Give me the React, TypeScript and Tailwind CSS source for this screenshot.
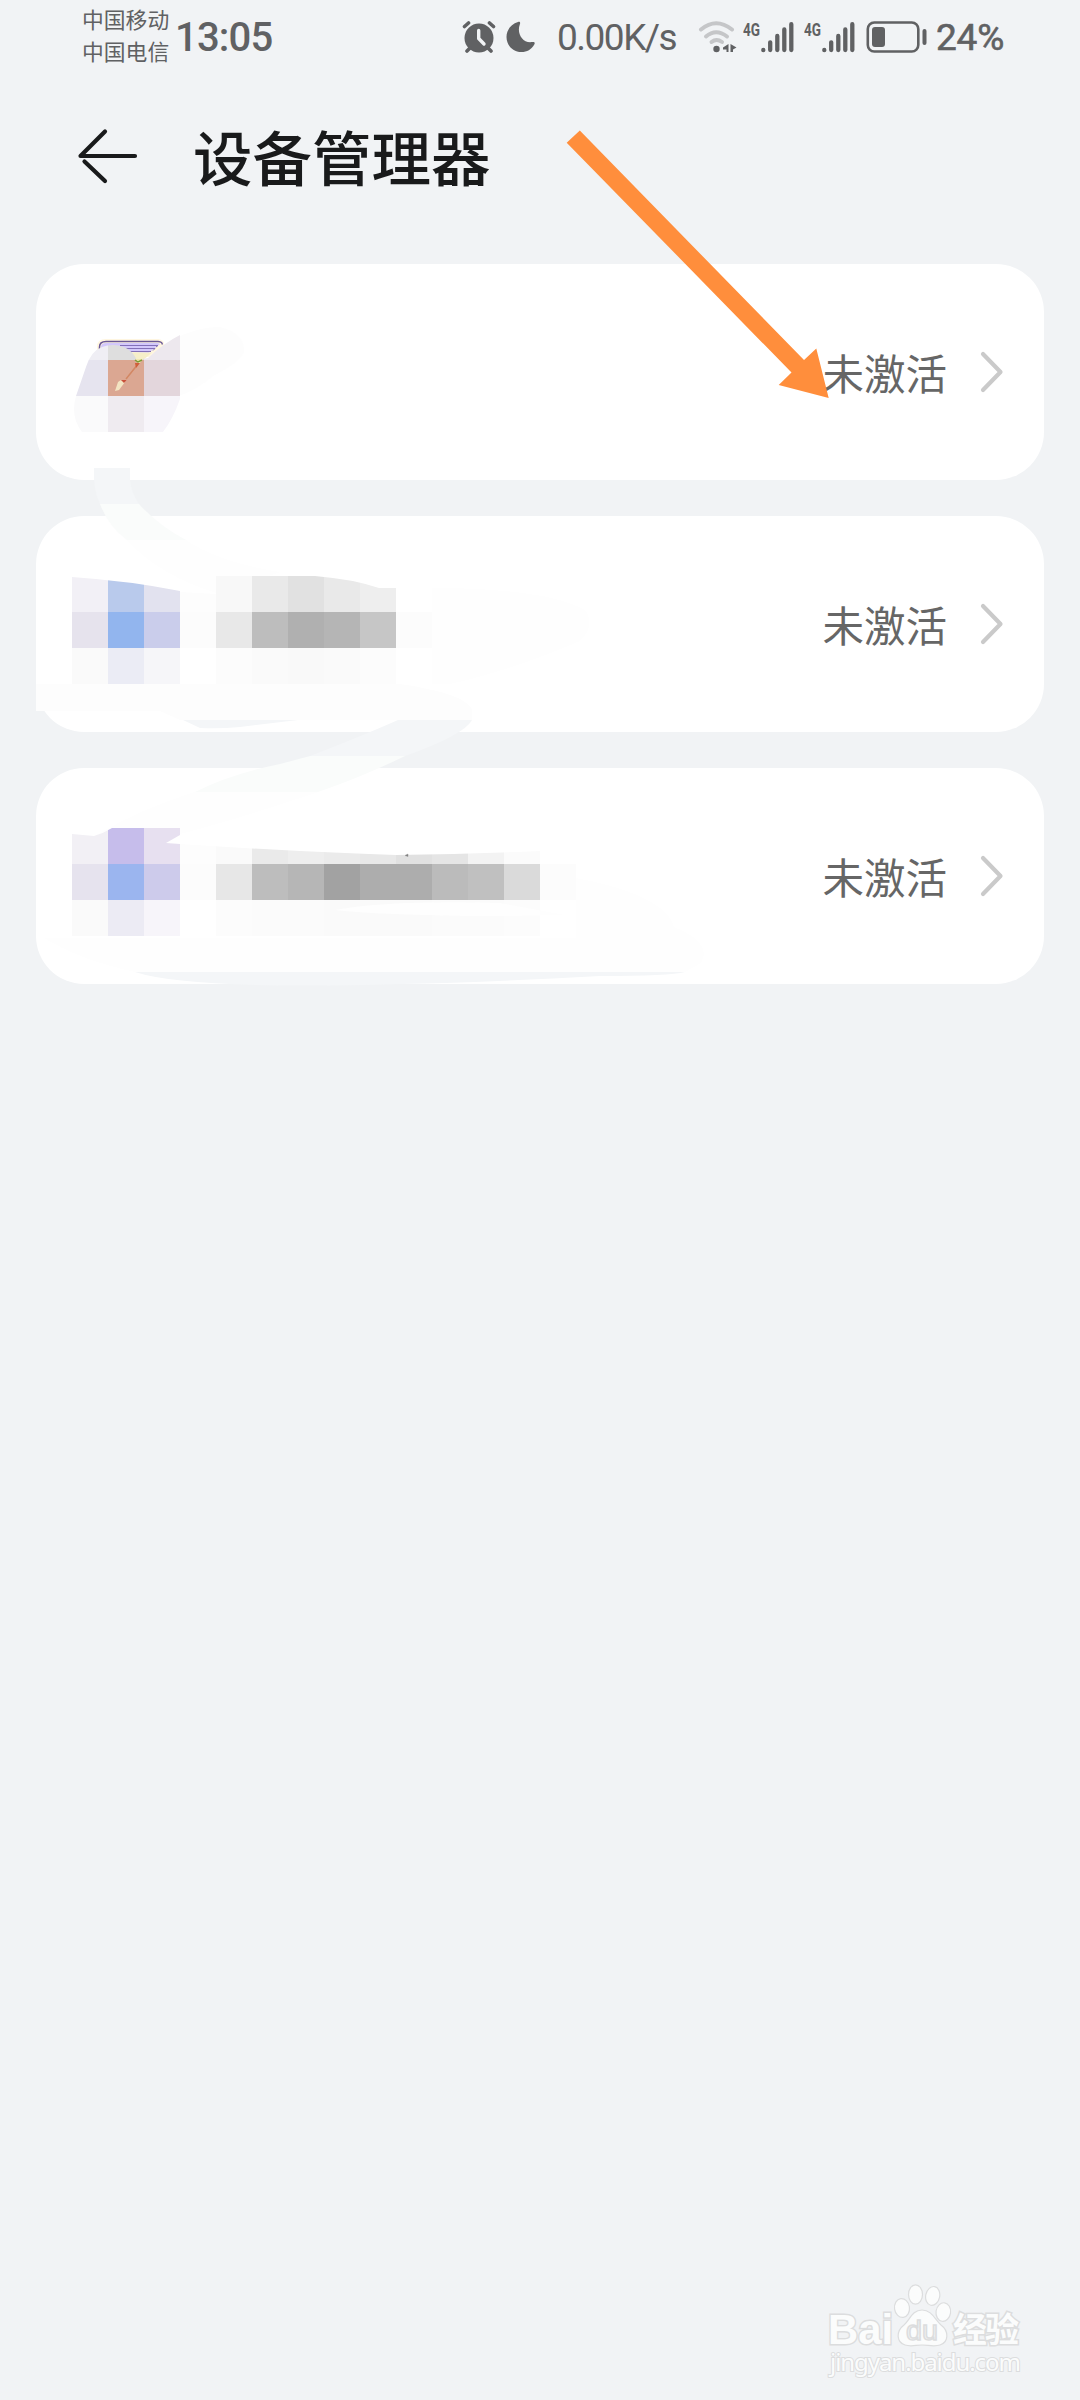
import type { ReactNode } from "react";

const CELL = 36;

type Mosaic = { x: number; y: number; rows: string[][]; clip: string };

const mosaics: Mosaic[] = [
  {
    x: 72,
    y: 324,
    rows: [
      ["#efeef4", "#dedede", "#ede8ee"],
      ["#e6e4ef", "#dba792", "#e3d6dc"],
      ["#fafafb", "#efebf0", "#f7f5fa"],
    ],
    clip: "M76 396L86 367Q91 351 102 347Q113 343 124 347Q132 350 137 360L148 358Q164 343 180 335V399Q173 419 163 432H82Q70 417 76 396Z",
  },
  {
    x: 72,
    y: 576,
    rows: [
      ["#f2f0f6", "#b9caec", "#e2e2ef"],
      ["#e6e3ed", "#92b5ee", "#cacdeb"],
      ["#fafafa", "#ebecf5", "#f6f6f9"],
    ],
    clip: "M72 577Q130 581 180 591V684H72Z",
  },
  {
    x: 180,
    y: 576,
    rows: [
      ["#fdfdfd", "#f8f8f8", "#e9e9e9", "#e1e1e1", "#e9e9e9", "#eeeeee", "#ffffff"],
      ["#fcfcfc", "#e8e8e8", "#bdbdbd", "#b0b0b0", "#b5b5b5", "#c6c6c6", "#fcfcfc"],
      ["#ffffff", "#fcfcfc", "#fafafa", "#f9f9f9", "#fafafa", "#fcfcfc", "#ffffff"],
    ],
    clip: "M180 592L216 594V576H315Q352 579 379 588H432V684H180Z",
  },
  {
    x: 72,
    y: 828,
    rows: [
      ["#f2f0f5", "#c6bdeb", "#e7e0f0"],
      ["#e6e3ee", "#9bb5ef", "#cdcbeb"],
      ["#fafafa", "#ecebf4", "#f7f5fa"],
    ],
    clip: "M72 834L94 836Q104 833 112 828H180V835L166 843L180 844V936H72Z",
  },
  {
    x: 180,
    y: 828,
    rows: [
      ["#fdfdfd", "#fafafa", "#eaeaea", "#eeeeee", "#ebebeb", "#e8e8e8", "#e1e1e1", "#e5e5e5", "#f3f3f3", "#fbfbfb", "#ffffff"],
      ["#fcfcfc", "#e7e7e7", "#bdbdbd", "#b6b6b6", "#a2a2a2", "#adadad", "#adadad", "#bbbbbb", "#c0c0c0", "#dadada", "#fcfcfc"],
      ["#ffffff", "#fcfcfc", "#fbfbfb", "#fbfbfb", "#fafafa", "#fafafa", "#fafafa", "#fbfbfb", "#fbfbfb", "#fcfcfc", "#ffffff"],
    ],
    clip: "M180 844Q300 852 396 855Q470 854 540 851H576V936H180Z",
  },
];

const devices = [{ status: "未激活" }, { status: "未激活" }, { status: "未激活" }];

function AlarmIcon() {
  return (
    <svg width="34" height="34" viewBox="0 0 34 34" fill="none">
      <circle cx="17" cy="18" r="14.5" fill="#606163" />
      <path d="M2.5 6.5L6.5 3M31.5 6.5L27.5 3M8 28L5 31M26 28L29 31" stroke="#606163" strokeWidth="3.6" strokeLinecap="round" />
      <path d="M16.7 10.5V18.5L22 24" stroke="#f1f3f5" strokeWidth="3.4" strokeLinecap="round" strokeLinejoin="round" />
    </svg>
  );
}

function MoonIcon() {
  return (
    <svg width="30" height="32" viewBox="0 0 30 32">
      <path d="M12 1C14 .5 14.6 1.5 13.8 3.5C10.5 12 16.500 22.500 26 21C28.500 20.600 29.300 21.500 28.300 23.500C25.500 28.500 21 31 15.500 31C7 31 .5 24.500 .5 16C.5 9 5 3 12 1Z" fill="#606163" />
    </svg>
  );
}

function WifiIcon() {
  return (
    <svg width="40" height="34" viewBox="0 0 40 34" fill="none">
      <g stroke="#c5c6c8" strokeWidth="4" strokeLinecap="round">
        <path d="M3 9.500Q18 -3 34 9.500" />
        <path d="M8 16.500Q18 8 29 16.500" />
        <path d="M13.500 22Q18.500 18 24 22" />
      </g>
      <circle cx="18.500" cy="29" r="3.200" fill="#606163" />
      <path d="M30.500 24V32H28.500V29.500H25V27.500ZM32.500 24L38.500 27.500L35 29.500V32H32.500Z" fill="#606163" />
    </svg>
  );
}

function SignalIcon() {
  return (
    <svg width="51" height="48" viewBox="0 -7 51 48">
      <text x="0" y="15.500" textLength="17" lengthAdjust="spacingAndGlyphs" fill="#606163" className="font-['Roboto'] text-[19px] font-bold">
        4G
      </text>
      <path d="M20.300 30V30.200M27.200 22.300V30M34.300 16V30M41.300 9.500V30M48.300 4.200V30" stroke="#606163" strokeWidth="4.300" strokeLinecap="round" />
    </svg>
  );
}

function BatteryIcon() {
  return (
    <svg width="61" height="34" viewBox="0 0 61 34" fill="none">
      <rect x="1.800" y="2.500" width="50.500" height="29" rx="6.500" stroke="#606163" strokeWidth="2.600" />
      <rect x="6" y="7" width="13" height="20" rx="3" fill="#606163" />
      <path d="M58.500 11V23" stroke="#606163" strokeWidth="4" strokeLinecap="round" />
    </svg>
  );
}

function StatusBar() {
  return (
    <div className="flex h-[73px] items-center pl-[82px] text-[#606163]">
      <div className="w-[93px] whitespace-nowrap pb-1 text-[21.8px] leading-8">
        <p>中国移动</p>
        <p>中国电信</p>
      </div>
      <p className="w-[287px] pt-0.5 font-['Roboto'] text-[40px] font-medium leading-none tracking-[-0.8px]">13:05</p>
      <AlarmIcon />
      <div className="ml-2.5 w-[51px]">
        <MoonIcon />
      </div>
      <p className="w-[141px] pt-0.5 font-['Roboto'] text-[37px] leading-none tracking-[-1.5px]">0.00K/s</p>
      <WifiIcon />
      <div className="ml-[5px] flex gap-2.5">
        <SignalIcon />
        <SignalIcon />
      </div>
      <div className="ml-[11px] w-[70px]">
        <BatteryIcon />
      </div>
      <p className="pt-0.5 font-['Roboto'] text-[37px] leading-none tracking-[-0.2px] [-webkit-text-stroke:0.6px_#606163]">24%</p>
    </div>
  );
}

function Header() {
  return (
    <header className="flex h-[166px] items-center pl-[77px] text-[#191a1b]">
      <svg width="62" height="56" viewBox="0 0 62 56" fill="none" className="mr-[54px]">
        <path d="M58 28H3.500L28 3.500M7.500 33.500L28 53" stroke="#191a1b" strokeWidth="4.200" strokeLinecap="round" strokeLinejoin="round" />
      </svg>
      <h1 className="text-[59.5px] font-medium leading-none">设备管理器</h1>
    </header>
  );
}

function Card({ children }: { children: ReactNode }) {
  return <li className="flex h-[216px] items-center justify-end rounded-[48px] bg-white pr-10">{children}</li>;
}

// Blurred-out app icons and names, drawn in page coordinates
function Redaction() {
  return (
    <svg width="1080" height="1000" viewBox="0 0 1080 1000" className="pointer-events-none absolute left-0 top-0" fill="none">
      <defs>
        {mosaics.map((m, i) => (
          <clipPath id={`mosaic-${i}`} key={i}>
            <path d={m.clip} />
          </clipPath>
        ))}
      </defs>

      <path d="M148 354Q190 326 220 327Q245 333 244 352Q239 363 213 376Q194 392 178 396Z" fill="#fdfdfd" />
      <path d="M94 468H130V480Q131 492 139 504H100Q93 490 94 468Z" fill="#f4f6f8" />
      <path d="M100 504H139Q159 526 186 540H127Q108 526 100 504Z" fill="#fafcfb" />
      <path d="M127 540H186Q218 562 280 572L219 594Q158 575 127 540Z" fill="#fefefe" />
      <path d="M432 588Q545 588 585 610Q596 625 580 641Q510 671 450 684H432Z" fill="#fefefe" />
      <path d="M36 684H400Q467 694 472 710V720H180L160 711H36Z" fill="#fdfdfd" />
      <path d="M183 720H298L240 727Q220 729 200 728Z" fill="#f4f6f8" />
      <path d="M398 720H472Q464 735 405 756H310Q362 736 398 720Z" fill="#f4f6f8" />
      <path d="M310 756H405Q362 777 318 792H195Q231 774 280 764Z" fill="#fafcfb" />
      <path d="M195 792H318Q238 819 180 834L94 836Q145 807 195 792Z" fill="#fefefe" />
      <path d="M576 878Q665 895 674 927Q713 943 701 963L685 972H135Q80 960 44 938H576Z" fill="#fefefe" />
      <path d="M135 972H685Q670 976 600 976Q490 982 400 984Q190 990 135 972Z" fill="#f4f6f8" />

      {/* uncovered part of the first app icon */}
      <path d="M99 352V347Q99 341 106 341H158Q163 342 162 345L149 355Z" fill="#d3c8fb" stroke="#fff6e0" strokeWidth="4" />
      <path d="M99.500 352V347Q99.500 341.500 106 341.500H158Q163 342 162 344.500" stroke="#6a5796" strokeWidth="1.500" />
      <path d="M120 345.500H158L156 347M126 348.500H155L153 350.500M129 351.500H151" stroke="#8370b8" strokeWidth="1" />
      <path d="M130 352.500H152L141 362H136Z" fill="#f6efc9" />

      {mosaics.map((m, i) => (
        <g clipPath={`url(#mosaic-${i})`} key={i}>
          {m.rows.map((row, r) =>
            row.map((color, c) => (
              <rect key={`${r}-${c}`} x={m.x + c * CELL} y={m.y + r * CELL} width={CELL} height={CELL} fill={color} />
            ))
          )}
        </g>
      ))}

      <path d="M135 359H143L139 364Z" fill="#efe6b0" />
      <path d="M138 364L126 379" stroke="#d28763" strokeWidth="1.500" />
      <path d="M135 360L138 362L142 360" stroke="#7d9a35" strokeWidth="1.500" />
      <path d="M135 363H140L136 368Z" fill="#d05e3a" />
      <path d="M115 391L118 382L121 380L125 382L119 390Z" fill="#f3e4c2" />
      <path d="M121 380L126.500 380L124 383Z" fill="#c9503a" />
      <path d="M335 910Q390 900 500 903L565 915Q480 917 430 915Q370 914 335 910Z" fill="#fefefe" />
      <path d="M405 855.500L408 854V856.500Z" fill="#777777" stroke="#999999" strokeWidth=".5" />
    </svg>
  );
}

function Pointer() {
  return (
    <svg width="264" height="270" viewBox="566 130 264 270" className="pointer-events-none absolute left-[566px] top-[130px]">
      <path d="M566.700 142.700L579.800 130.500L804 360L816.300 348.500L828.700 398L778.700 385L791.500 372.500Z" fill="#ff8e3c" />
    </svg>
  );
}

function Watermark() {
  return (
    <svg width="210" height="100" viewBox="0 0 210 100" className="absolute bottom-5 right-[46px]" fill="#fbfcfc" stroke="#dcddde" strokeWidth="1.200">
      <text x="4" y="64" textLength="65" lengthAdjust="spacingAndGlyphs" strokeWidth="3" style={{ paintOrder: "stroke" }} className="font-['Liberation_Sans'] text-[43px] font-bold">Bai</text>
      <ellipse cx="78" cy="28" rx="7.500" ry="9.500" transform="rotate(-8 78 28)" />
      <ellipse cx="91.500" cy="14.500" rx="7" ry="9.700" />
      <ellipse cx="108.700" cy="16" rx="7" ry="9.500" transform="rotate(12 109 16)" />
      <ellipse cx="119.300" cy="32" rx="7.300" ry="9.300" transform="rotate(8 119 32)" />
      <path d="M98 30C88 30 86 40 80 45C72 51 72 62 81 65C87 67 92 65 98 65C104 65 110 67 116 65C125 62 125 51 117 45C111 40 108 30 98 30Z" />
      <text x="82" y="59.500" textLength="32" lengthAdjust="spacingAndGlyphs" fill="#f1f3f5" strokeWidth="1.500" className="font-['Liberation_Sans'] text-[27px]">du</text>
      <text x="129" y="62" textLength="66" strokeWidth="3" style={{ paintOrder: "stroke" }} className="text-[34px] font-bold">经验</text>
      <text x="6" y="91" textLength="191" strokeWidth="2" style={{ paintOrder: "stroke" }} className="font-['Noto_Sans'] text-[24px]">jingyan.baidu.com</text>
    </svg>
  );
}

export default function App() {
  return (
    <div className="relative h-[2400px] w-[1080px] overflow-hidden bg-[#f1f3f5] font-['Noto_Sans_CJK_SC',sans-serif]">
      <StatusBar />
      <Header />

      {/* Device list */}
      <ul className="mt-[25px] flex flex-col gap-9 px-9">
        {devices.map((device, i) => (
          <Card key={i}>
            <span className="mr-[33px] pt-0.5 text-[41.5px] leading-none text-[#666666]">{device.status}</span>
            <svg width="24" height="42" viewBox="0 0 24 42" fill="none">
              <path d="M3 3L20.500 21L3 39" stroke="#cacaca" strokeWidth="4.200" strokeLinecap="round" strokeLinejoin="round" />
            </svg>
          </Card>
        ))}
      </ul>

      <Redaction />
      <Pointer />
      <Watermark />
    </div>
  );
}
